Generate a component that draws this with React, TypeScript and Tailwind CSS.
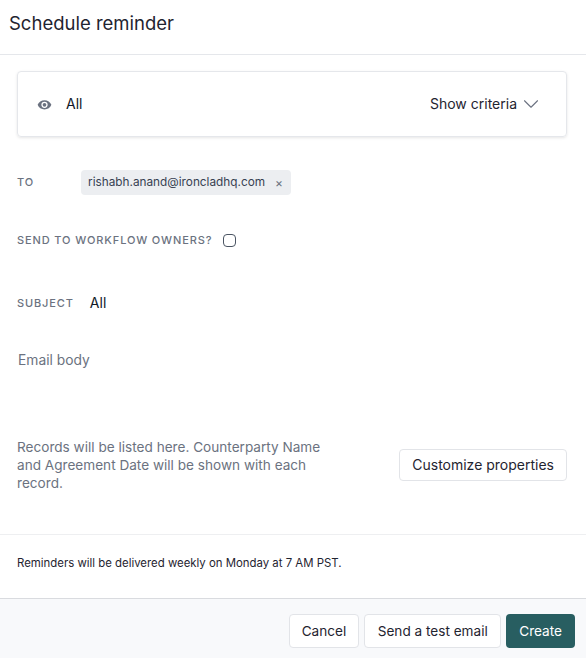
import { ChevronDown } from "lucide-react"

function Label({ children }: { children: string }) {
  return <span className="block pt-px text-[11px] leading-none font-medium tracking-[0.08em] text-[#6b7280]">{children}</span>
}

export default function App() {
  return (
    <div className="flex h-[658px] w-[586px] flex-col bg-white font-['Inter',sans-serif] text-[#1f2430]">
      <header className="flex h-[55px] items-center border-b border-[#e5e7eb] px-[9px] pb-[7px]">
        <h1 className="text-[18.5px] font-normal">Schedule reminder</h1>
      </header>

      <div className="flex-1 pl-[17px] pr-[19px]">
        <div className="mt-4 flex h-[66px] items-center rounded border border-[#e5e7eb] pl-[19px] pr-[22px] shadow-[0_1px_3px_rgba(0,0,0,0.1)]">
          <svg viewBox="0 0 24 24" className="h-[15px] w-[15px] fill-[#6b7280]">
            <path d="M12 5C7 5 2.7 8.1 1 12.5 2.7 16.9 7 20 12 20s9.3-3.1 11-7.5C21.3 8.1 17 5 12 5zm0 12.5a5 5 0 1 1 0-10 5 5 0 0 1 0 10zm0-8a3 3 0 1 0 0 6 3 3 0 0 0 0-6z" />
          </svg>
          <span className="ml-[14px] text-sm text-[#111827]">All</span>
          <span className="ml-auto text-sm">Show criteria</span>
          <ChevronDown className="ml-px h-[26px] w-[26px] text-[#6b7280]" strokeWidth={1} />
        </div>

        <div className="mt-8 flex h-[26px] items-center">
          <div className="w-16">
            <Label>TO</Label>
          </div>
          <div className="flex h-[25px] w-[210px] items-center rounded-sm bg-[#eceef1] pl-[7px] pt-0.5 text-[11.8px] text-[#374151]">
            rishabh.anand@ironcladhq.com
            <span className="ml-[10px] text-xs leading-none text-[#6b7280]">×</span>
          </div>
        </div>

        <div className="mt-8 flex h-[26px] items-center">
          <Label>SEND TO WORKFLOW OWNERS?</Label>
          <span className="ml-[11px] h-[13px] w-[13px] rounded-sm border border-[#4b5563] bg-white" />
        </div>

        <div className="mt-10 flex h-5 items-center">
          <Label>SUBJECT</Label>
          <span className="ml-4 text-sm text-[#111827]">All</span>
        </div>

        <p className="ml-px mt-[37px] text-[13.8px] leading-5 text-[#6b7280]">Email body</p>

        <div className="mt-[68px] flex items-center justify-between">
          <p className="w-[320px] text-[13.6px] leading-[18px] text-[#6b7280]">
            Records will be listed here. Counterparty Name and Agreement Date will be shown with each record.
          </p>
          <button className="h-8 rounded border border-[#e2e4e8] bg-white px-3 text-sm text-[#1f2430]">
            Customize properties
          </button>
        </div>
      </div>

      <div className="flex h-[64px] items-center border-t border-[#eeeff1] px-[17px] pb-[6px] text-[11.4px] text-[#1f2430]">
        Reminders will be delivered weekly on Monday at 7 AM PST.
      </div>

      <footer className="flex h-[60px] items-center justify-end gap-[5px] border-t border-[#d9dbdf] bg-[#f8f9fb] pr-[11px] pt-[5px]">
        <button className="h-[34px] rounded border border-[#e2e4e8] bg-white px-3 text-[13.6px] text-[#1f2430]">Cancel</button>
        <button className="h-[34px] rounded border border-[#e2e4e8] bg-white px-[12.5px] text-[13.6px] text-[#1f2430]">Send a test email</button>
        <button className="h-[34px] rounded bg-[#285e61] px-[13px] text-[13.6px] text-white">Create</button>
      </footer>
    </div>
  )
}
